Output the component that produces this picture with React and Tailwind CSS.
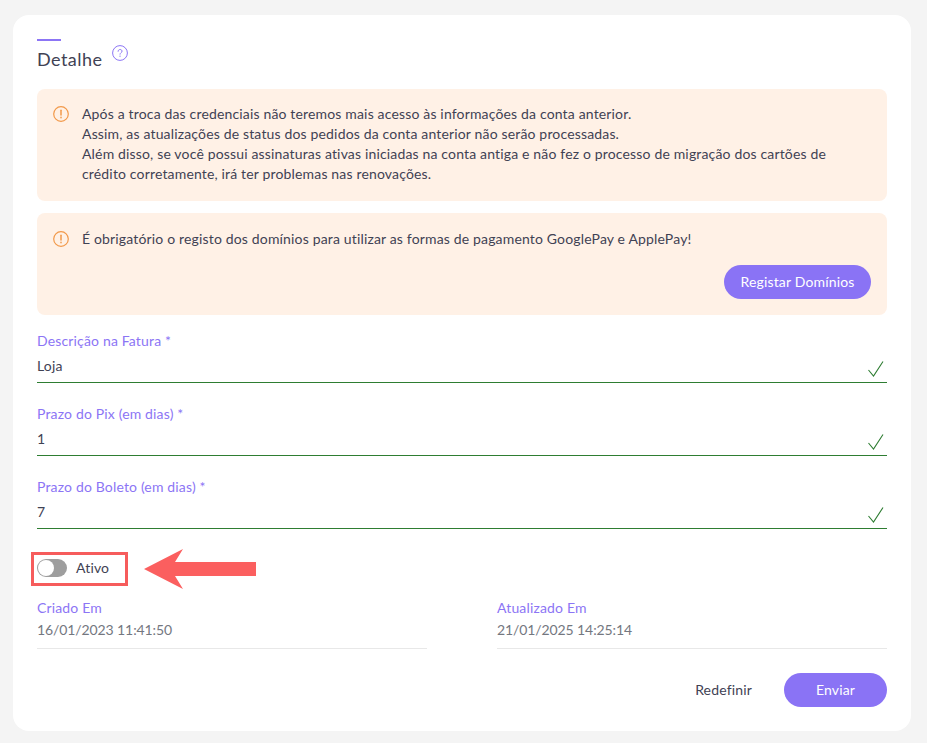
import React from 'react';

const Warn = () => (
  <svg className="w-4 h-4 shrink-0 mt-[1px]" viewBox="0 0 16 16" fill="none" stroke="#f2994a" strokeWidth="1.2">
    <circle cx="8" cy="8" r="7.3" />
    <path d="M8 4.2v4.8" strokeWidth="1.5" strokeLinecap="round" />
    <path d="M8 11.2v.5" strokeWidth="1.5" strokeLinecap="round" />
  </svg>
);

const Field = ({ label, value }) => (
  <div className="h-[73px] pt-[16px]">
    <div className="text-sm leading-[20px] text-[#8c75f5]">{label}</div>
    <div className="relative flex items-center h-[32px] border-b border-[#2e7d32] text-sm text-[#3f4254] pb-[1px]">
      <span>{value}</span>
      <svg className="absolute right-[3px] bottom-[5px] w-[16px] h-[16px]" viewBox="0 0 16 16" fill="none" stroke="#2e7d32" strokeWidth="1.1">
        <path d="M0.5 9L5.5 15L15 0.5" />
      </svg>
    </div>
  </div>
);

const Stamp = ({ label, value }) => (
  <div className="w-[390px] h-[51px] border-b border-[#e8e8e8]">
    <div className="text-sm leading-[20px] text-[#8c75f5]">{label}</div>
    <div className="text-sm leading-[20px] mt-[2px] text-[#74777f] tracking-[-0.1px]">{value}</div>
  </div>
);

export default function App() {
  return (
    <div className="min-h-[743px] bg-[#f4f4f4] pt-[15px] pb-[12px] pl-[13px] pr-[16px] tracking-[0.16px] font-['Lato','Open_Sans',sans-serif]">
      <div className="relative h-[716px] bg-white rounded-[16px] px-[24px] pt-[24px]">
        <div className="w-[24px] h-[2px] bg-[#8c75f5]" />
        <div className="flex items-start h-[48px]">
          <h2 className="mt-[6px] text-lg leading-[24px] font-normal tracking-[0.45px] text-[#3f4254]">Detalhe</h2>
          <svg className="ml-[10px] mt-[4px] w-4 h-4" viewBox="0 0 16 16" fill="none" stroke="#8c75f5" strokeWidth="1">
            <circle cx="8" cy="8" r="7.4" />
            <path d="M6.1 6.3c0-1.1.9-1.8 2-1.8s1.9.7 1.9 1.7c0 1.5-2 1.5-2 3" strokeLinecap="round" />
            <path d="M8 11v.5" strokeLinecap="round" />
          </svg>
        </div>

        <div className="flex gap-[13px] h-[112px] rounded-[8px] bg-[#fff1e6] px-[16px] pt-[15px] text-sm leading-[20px] text-[#3f4254]">
          <div className="pt-[1px]"><Warn /></div>
          <p>
            Após a troca das credenciais não teremos mais acesso às informações da conta anterior.<br />
            Assim, as atualizações de status dos pedidos da conta anterior não serão processadas.<br />
            Além disso, se você possui assinaturas ativas iniciadas na conta antiga e não fez o processo de migração dos cartões de<br />
            crédito corretamente, irá ter problemas nas renovações.
          </p>
        </div>

        <div className="mt-[12px] h-[102px] rounded-[8px] bg-[#fff1e6] px-[16px] pt-[16px] text-sm leading-[20px] text-[#3f4254]">
          <div className="flex gap-[13px]">
            <div className="pt-[1px]"><Warn /></div>
            <p>É obrigatório o registo dos domínios para utilizar as formas de pagamento GooglePay e ApplePay!</p>
          </div>
          <div className="flex justify-end mt-[16px]">
            <button className="h-[34px] w-[147px] rounded-full bg-[#8a73f5] text-sm text-white">Registar Domínios</button>
          </div>
        </div>

        <Field label="Descrição na Fatura *" value="Loja" />
        <Field label="Prazo do Pix (em dias) *" value="1" />
        <Field label="Prazo do Boleto (em dias) *" value="7" />

        <div className="flex items-center gap-[9px] h-[34px] mt-[17px]">
          <span className="relative block w-[30px] h-[18px] rounded-full bg-[#9e9e9e]">
            <span className="absolute left-[1px] top-[1px] w-[16px] h-[16px] rounded-full bg-white" />
          </span>
          <span className="text-sm text-[#3f4254]">Ativo</span>
        </div>

        <div className="flex justify-between mt-[13px]">
          <Stamp label="Criado Em" value="16/01/2023 11:41:50" />
          <Stamp label="Atualizado Em" value="21/01/2025 14:25:14" />
        </div>

        <div className="flex justify-end items-center mt-[24px]">
          <button className="text-sm text-[#3f4254] mr-[32px]">Redefinir</button>
          <button className="h-[34px] w-[103px] rounded-full bg-[#8a73f5] text-sm text-white">Enviar</button>
        </div>

        {/* red annotation over the toggle */}
        <div className="absolute left-[18px] top-[537px] w-[97px] h-[34px] border-[3px] border-[#f65c5c]" />
        <svg className="absolute left-[131px] top-[534px]" width="113" height="40" viewBox="0 0 113 40">
          <path d="M0 20L39 0L31 13H112V27H31L39 40Z" fill="#fb5f5f" />
        </svg>
      </div>
    </div>
  );
}
